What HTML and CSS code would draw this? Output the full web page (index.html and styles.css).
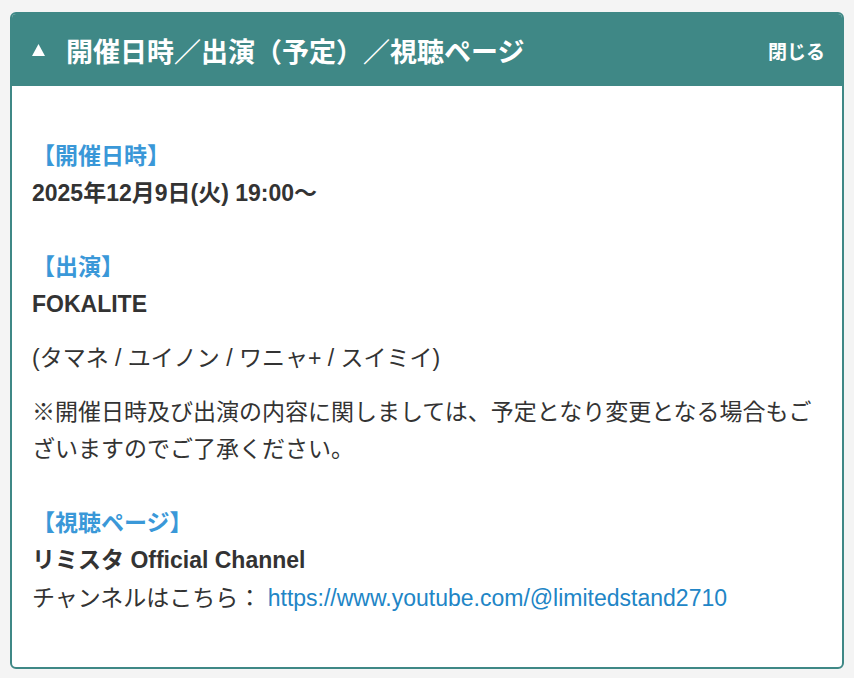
FILE: index.html
```html
<!DOCTYPE html>
<html lang="ja">
<head>
    <meta charset="UTF-8">
    <title>開催日時／出演（予定）／視聴ページ</title>
    <meta name="viewport" content="width=device-width, initial-scale=1">
    <link rel="stylesheet" href="styles.css">
</head>
<body>
<div class="panel">
    <div class="panel-head">
        <h2 class="panel-title">
            <svg class="arrow" width="13" height="12" viewBox="0 0 13 12"><polygon points="6.5,0 13,12 0,12" fill="#fff"/></svg>
            開催日時／出演（予定）／視聴ページ
        </h2>
        <span class="close">閉じる</span>
    </div>
    <div class="panel-body">
        <div class="section">
            <h3>【開催日時】</h3>
            <p class="strong">2025年12月9日(火) 19:00〜</p>
        </div>

        <div class="section">
            <h3>【出演】</h3>
            <p class="strong">FOKALITE</p>
            <p>(タマネ / ユイノン / ワニャ+ / スイミイ)</p>
            <p>※開催日時及び出演の内容に関しましては、予定となり変更となる場合もございますのでご了承ください。</p>
        </div>

        <div class="section">
            <h3>【視聴ページ】</h3>
            <p class="strong tight">リミスタ Official Channel</p>
            <p>チャンネルはこちら： <a href="https://www.youtube.com/@limitedstand2710">https://www.youtube.com/@limitedstand2710</a></p>
        </div>
    </div>
</div>
</body>
</html>
```

FILE: styles.css
```css
body {
    font-family: "Liberation Sans", "Noto Sans CJK JP", sans-serif;
    background: #f4f4f4;
    color: #333;
    margin: 0;
    padding: 12px 10px;
}
.panel {
    background: #fff;
    border: 2px solid #3f8886;
    border-radius: 6px;
    overflow: hidden;
}
.panel-head {
    background: #3f8886;
    color: #fff;
    height: 72px;
    padding: 0 17px 0 20px;
    display: flex;
    justify-content: space-between;
    align-items: center;
}
.panel-title {
    margin: 0;
    font-size: 27px;
    font-weight: bold;
    display: flex;
    align-items: center;
}
.arrow {
    margin-right: 21px;
}
.close {
    font-size: 19px;
    font-weight: bold;
}
.panel-body {
    padding: 52px 20px 50px;
    font-size: 23px;
    line-height: 37px;
}
.section + .section {
    margin-top: 37px;
}
h3 {
    margin: 0;
    font-size: 23px;
    color: #3a98d8;
    font-weight: bold;
}
p {
    margin: 0;
}
p + p {
    margin-top: 17px;
}
p.tight + p {
    margin-top: 1px;
}
.strong {
    font-weight: bold;
}
a {
    color: #2185c6;
    text-decoration: none;
}
```
